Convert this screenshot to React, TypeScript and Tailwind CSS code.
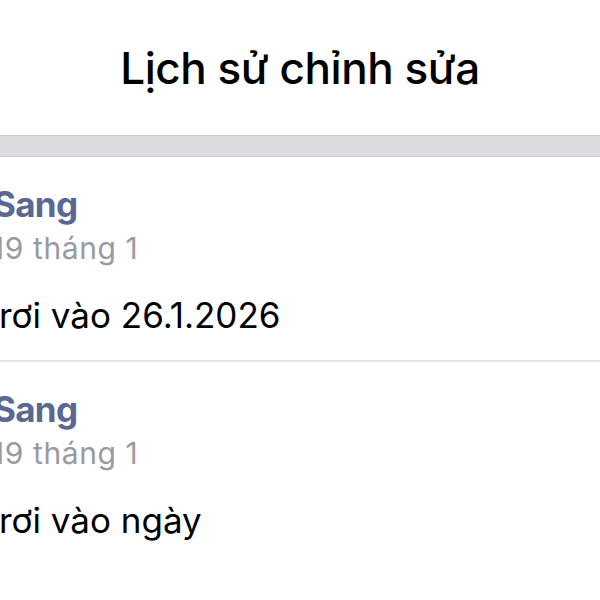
import React from "react";

const font = { fontFamily: "Inter, 'Noto Sans', sans-serif" };

function Entry({ body }: { body: string }) {
  return (
    <div className="pt-[30px] flex flex-col">
      <div className="ml-[-7px] text-[35px] leading-[35px] font-bold tracking-[-0.02em] text-[#5a6893] whitespace-nowrap">
        Sang
      </div>
      <div className="mt-[12px] ml-[-8px] text-[30px] leading-[29px] tracking-[0.02em] text-[#9a9a9e] whitespace-nowrap">
        19 tháng 1
      </div>
      <div className="mt-[35px] ml-[-1px] text-[35px] leading-[34px] text-black whitespace-nowrap">
        {body}
      </div>
    </div>
  );
}

export default function App() {
  return (
    <div className="w-[600px] h-[600px] bg-white overflow-hidden" style={font}>
      <div className="h-[135px] flex items-center justify-center">
        <h1 className="text-[44px] leading-[44px] font-medium tracking-[-0.01em] text-black">Lịch sử chỉnh sửa</h1>
      </div>
      <div className="h-[22px] bg-[#dcdce0] border-y border-[#c9c9ce]" />
      <Entry body="rơi vào 26.1.2026" />
      <div className="mt-[28px] h-[2px] bg-[#e4e4e6]" />
      <Entry body="rơi vào ngày" />
    </div>
  );
}
